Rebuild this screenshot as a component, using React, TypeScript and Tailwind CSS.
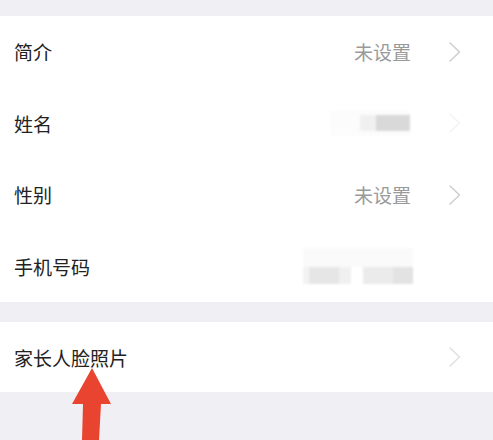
import React from "react";

const font = { fontFamily: '"Noto Sans CJK SC", "Noto Sans", sans-serif' };

function Chevron({ color = "#cfcfcf" }: { color?: string }) {
  return (
    <svg width="14" height="22" viewBox="0 0 14 22" className="shrink-0">
      <path
        d="M2 2 L11.5 11 L2 20"
        fill="none"
        stroke={color}
        strokeWidth="1.6"
        strokeLinecap="round"
        strokeLinejoin="round"
      />
    </svg>
  );
}

function Row({ label, children }: { label: string; children?: React.ReactNode }) {
  return (
    <div className="flex h-[71.5px] items-center justify-between pl-[14px] pr-[31px]">
      <span className="text-[19px] leading-none text-[#222]">{label}</span>
      <div className="flex items-center">{children}</div>
    </div>
  );
}

export default function App() {
  return (
    <div className="relative h-[440px] w-[493px] overflow-hidden bg-[#efeff4]" style={font}>
      <div className="h-[16px]" />
      <div className="bg-white">
        <Row label="简介">
          <span className="mr-[37px] text-[19px] leading-none text-[#9a9a9a]">未设置</span>
          <Chevron />
        </Row>
        <Row label="姓名">
          <div className="mr-[38px] flex h-[26px] w-[80px] items-center justify-end bg-[#fcfcfc] blur-[1px]">
            <div className="h-[16px] w-[16px] bg-[#f0f0f0]" />
            <div className="h-[16px] w-[34px] bg-[#d9d9d9]" />
          </div>
          <Chevron color="#f3f3f3" />
        </Row>
        <Row label="性别">
          <span className="mr-[37px] text-[19px] leading-none text-[#9a9a9a]">未设置</span>
          <Chevron />
        </Row>
        <Row label="手机号码">
          <div className="mr-[49px] flex h-[36px] w-[110px] flex-col justify-end bg-[#fafafa] blur-[1px]">
            <div className="flex h-[17px]">
              <div className="w-[6px] bg-[#f3f3f3]" />
              <div className="w-[30px] bg-[#e6e6e6]" />
              <div className="w-[12px] bg-[#f0f0f0]" />
              <div className="w-[12px] bg-white" />
              <div className="w-[30px] bg-[#ebebeb]" />
              <div className="w-[20px] bg-[#e3e3e3]" />
            </div>
          </div>
        </Row>
      </div>
      <div className="h-[20px]" />
      <div className="bg-white">
        <div className="flex h-[70px] items-center justify-between pl-[14px] pr-[31px]">
          <span className="text-[19px] leading-none text-[#222]">家长人脸照片</span>
          <Chevron color="#e0e0e0" />
        </div>
      </div>
      <svg
        className="absolute left-0 top-0"
        width="493"
        height="440"
        viewBox="0 0 493 440"
      >
        <path
          d="M92 368 L111 404 L101 404 L99 440 L82 440 L83 404 L72 404 Z"
          fill="#e8442f"
        />
      </svg>
    </div>
  );
}
